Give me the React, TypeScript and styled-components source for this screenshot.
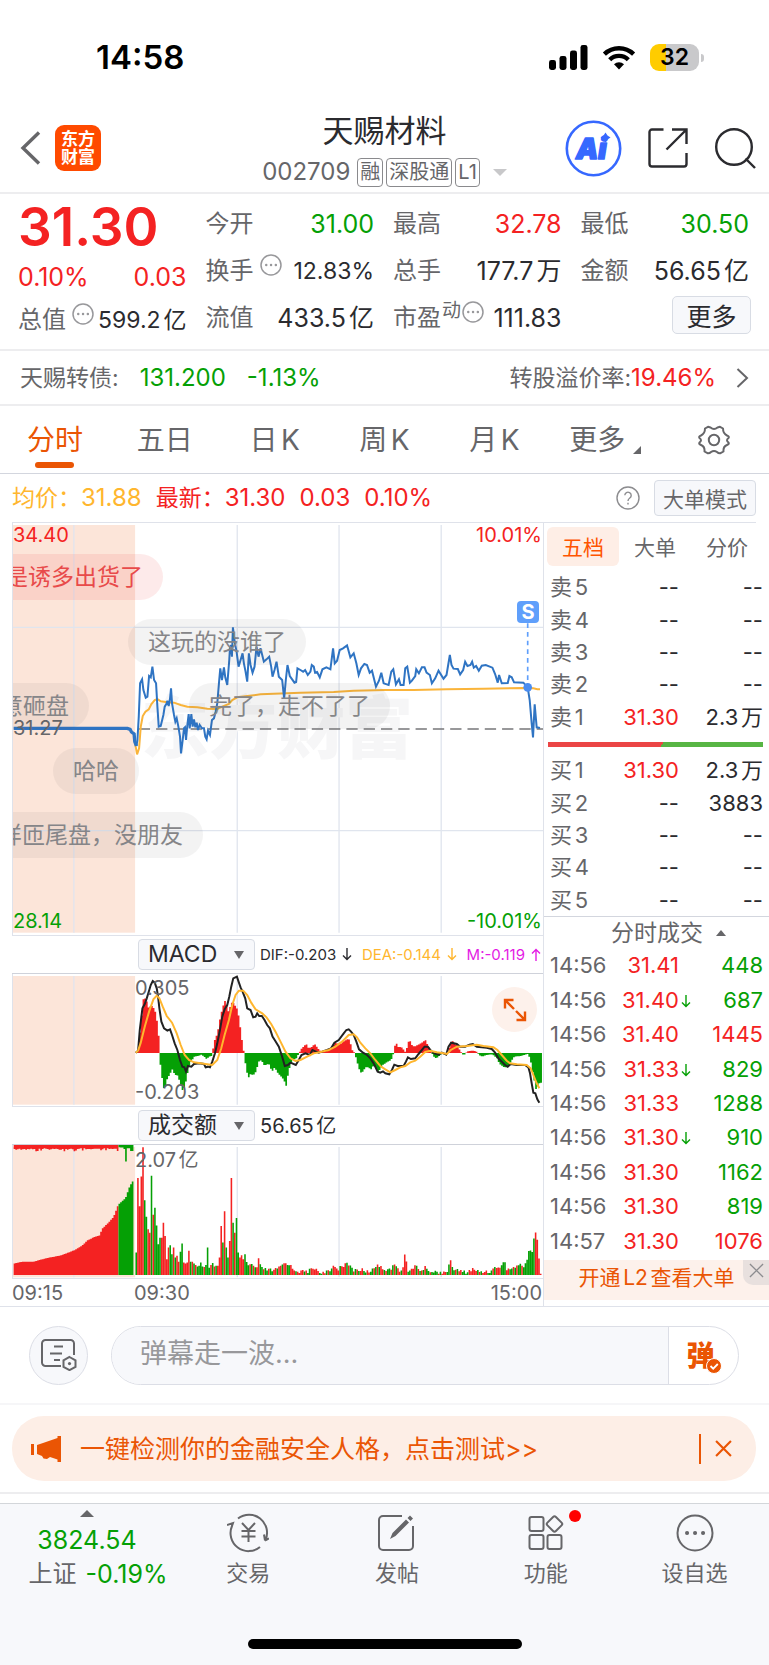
import React from 'react';
import styled, { createGlobalStyle } from 'styled-components';

const C = {
  red: '#f42222',
  green: '#05a005',
  dark: '#2b2b2f',
  gray: '#666669',
  line: '#dfe2ea',
  faint: '#ededef',
  panel: '#f7f8fb',
  orange: '#ea5504',
  peach: '#fdeee6',
  yellow: '#ffb62e',
  blue: '#2f74c3',
  magenta: '#e41be4',
};

const Global = createGlobalStyle`
  * { box-sizing: border-box; }
  body { margin: 0; background: #fff; }
  body, button, input, select {
    font-family: Inter, "Noto Sans CJK SC", sans-serif;
    text-autospace: normal;
  }
  button, select, input { margin: 0; padding: 0; border: 0; background: none; color: inherit; }
  svg { display: block; }
`;

const Page = styled.main`
  display: flex;
  flex-direction: column;
  min-height: 100vh;
  color: ${C.dark};
  font-size: 24px;
  line-height: 30px;
  white-space: nowrap;
`;

/* ---------- status bar ---------- */
const StatusBar = styled.div`
  display: flex;
  justify-content: space-between;
  align-items: center;
  height: 104px;
  padding: 10px 70px 0 96px;
  color: #000;
`;
const Clock = styled.time`
  font-size: 33px;
  font-weight: 600;
`;
const StatusIcons = styled.div`
  display: flex;
  align-items: center;
  gap: 14px;
`;
const Battery = styled.div`
  position: relative;
  width: 49px;
  height: 27px;
  border-radius: 9px;
  background: linear-gradient(90deg, #ffcc00 32%, #c9c9cb 32%);
  font-size: 23px;
  font-weight: 600;
  line-height: 27px;
  text-align: center;
  &::after {
    content: '';
    position: absolute;
    right: -5px;
    top: 10px;
    width: 3px;
    height: 8px;
    border-radius: 0 3px 3px 0;
    background: #c9c9cb;
  }
`;

/* ---------- header ---------- */
const Header = styled.header`
  display: grid;
  grid-template-columns: 1fr auto 1fr;
  align-items: center;
  height: 90px;
  padding: 0 13px;
  border-bottom: 2px solid ${C.faint};
`;
const HeaderSide = styled.div<{ $end?: boolean }>`
  display: flex;
  align-items: center;
  justify-content: ${(p) => (p.$end ? 'flex-end' : 'flex-start')};
  gap: ${(p) => (p.$end ? '26px' : '14px')};
  padding-left: 7px;
`;
const IconButton = styled.button`
  display: flex;
  align-items: center;
  justify-content: center;
  color: ${C.dark};
`;
const Logo = styled.div`
  width: 46px;
  height: 46px;
  padding-top: 5px;
  border-radius: 9px;
  background: #ff4a00;
  color: #fff;
  font-size: 17px;
  font-weight: 700;
  line-height: 18px;
  text-align: center;
`;
const TitleBlock = styled.div`
  display: flex;
  flex-direction: column;
  align-items: center;
  padding-top: 4px;
`;
const Title = styled.h1`
  margin: 0;
  font-size: 31px;
  font-weight: 400;
  line-height: 44px;
`;
const SubTitle = styled.div`
  display: flex;
  align-items: center;
  gap: 3px;
  height: 38px;
  color: ${C.gray};
  font-size: 24px;
`;
const StockCode = styled.span`
  margin-right: 4px;
`;
const Tag = styled.span`
  padding: 0 2px;
  border: 1px solid #8a8a8d;
  border-radius: 4px;
  font-size: 20px;
  line-height: 27px;
`;
const Caret = styled.i<{ $up?: boolean; $w?: number; $h?: number; $color?: string }>`
  display: inline-block;
  border: ${(p) => p.$w ?? 6}px solid transparent;
  border-${(p) => (p.$up ? 'bottom' : 'top')}: ${(p) => p.$h ?? p.$w ?? 6}px solid ${(p) => p.$color ?? C.gray};
  border-${(p) => (p.$up ? 'top' : 'bottom')}: 0;
`;
const CodeCaret = styled(Caret)`
  margin-left: 10px;
`;

/* ---------- quote ---------- */
const Quote = styled.section`
  display: grid;
  grid-template-columns: repeat(4, minmax(0, 1fr));
  column-gap: 19px;
  padding: 6px 20px 8px 18px;
  border-bottom: 2px solid ${C.faint};
`;
const QuoteCol = styled.div`
  display: grid;
  grid-template-rows: repeat(3, 47px);
  align-items: center;
`;
const PriceCol = styled(QuoteCol)`
  grid-template-rows: 55px 44px 42px;
`;
const Price = styled.strong`
  color: ${C.red};
  font-size: 53px;
  font-weight: 600;
  line-height: 55px;
`;
const Pair = styled.div`
  display: flex;
  justify-content: space-between;
  align-items: center;
`;
const Label = styled.span<{ $tight?: boolean }>`
  display: flex;
  gap: ${(p) => (p.$tight ? 1 : 6)}px;
  color: ${C.gray};
  sup { margin-top: -4px; font-size: 19px; line-height: 24px; vertical-align: baseline; }
`;
const Value = styled.span<{ $c?: string; $small?: boolean }>`
  color: ${(p) => p.$c ?? C.dark};
  font-size: ${(p) => (p.$small ? 23 : 25)}px;
`;
const Hint = styled.svg`
  flex: none;
  margin-top: -2px;
`;
const MoreButton = styled.button`
  justify-self: end;
  width: 79px;
  height: 38px;
  margin: 0 -2px 5px 0;
  border: 1px solid #d8dce4;
  border-radius: 5px;
  background: ${C.panel};
  font-size: 25px;
  color: ${C.dark};
`;

/* ---------- bond ---------- */
const BondRow = styled.a`
  display: flex;
  align-items: center;
  height: 55px;
  padding: 0 20px;
  border-bottom: 2px solid ${C.faint};
  color: ${C.gray};
  font-size: 23px;
  text-decoration: none;
`;
const BondName = styled.span`
  flex: 1;
  display: flex;
  gap: 21px;
`;
const Figure = styled.span<{ $c: string }>`
  color: ${(p) => p.$c};
  font-size: 24px;
`;
const BondRate = styled.span`
  margin-right: 20px;
`;

/* ---------- period tabs ---------- */
const Tabs = styled.nav`
  display: grid;
  grid-template-columns: repeat(7, minmax(0, 1fr));
  height: 68px;
  border-bottom: 1px solid #d3d6de;
`;
const Tab = styled.button<{ $on?: boolean }>`
  position: relative;
  display: flex;
  align-items: center;
  justify-content: center;
  color: ${(p) => (p.$on ? C.orange : C.gray)};
  font-size: 28px;
  line-height: 32px;
  &::after {
    content: '';
    display: ${(p) => (p.$on ? 'block' : 'none')};
    position: absolute;
    bottom: 5px;
    width: 39px;
    height: 6px;
    border-radius: 3px;
    background: ${C.orange};
  }
`;
const Corner = styled.i`
  align-self: flex-end;
  margin: 0 -2px 19px 8px;
  border: 4px solid transparent;
  border-right-color: ${C.gray};
  border-bottom-color: ${C.gray};
`;

const InfoRow = styled.div`
  display: flex;
  align-items: center;
  gap: 14px;
  height: 49px;
  margin: 0 13px 0 12px;
  border-bottom: 1px solid ${C.line};
  color: ${C.red};
  font-size: 23px;
`;
const Average = styled.span`
  color: ${C.yellow};
`;
const Spacer = styled.span`
  flex: 1;
`;
const ModeButton = styled.button`
  width: 102px;
  height: 36px;
  border: 1px solid #d8dce4;
  border-radius: 4px;
  background: ${C.panel};
  color: ${C.gray};
  font-size: 21px;
`;

/* ---------- market area ---------- */
const Market = styled.section`
  display: grid;
  grid-template-columns: minmax(0, 1fr) 225px;
  padding-left: 12px;
  border-bottom: 1px solid ${C.line};
`;
const Charts = styled.div`
  border-right: 1px solid ${C.line};
`;
const Plot = styled.div<{ $h: number }>`
  position: relative;
  height: ${(p) => p.$h}px;
  overflow: hidden;
  border-left: 1px solid ${C.line};
  border-bottom: 1px solid ${C.line};
`;
const Canvas = styled.svg`
  position: absolute;
  inset: 0;
  width: 100%;
  height: 100%;
`;
const Mark = styled.span<{ $top: number; $left?: number; $right?: number; $c?: string }>`
  position: absolute;
  top: ${(p) => p.$top}px;
  ${(p) => (p.$right !== undefined ? `right: ${p.$right}px;` : `left: ${p.$left ?? 0}px;`)}
  color: ${(p) => p.$c ?? C.gray};
  font-size: 20px;
  line-height: 24px;
`;
const Watermark = styled.span`
  position: absolute;
  top: 165px;
  left: 128px;
  color: #f6f6f7;
  font-size: 68px;
  font-weight: 900;
  line-height: 80px;
`;
const Bullet = styled.span<{ $top: number; $left: number; $hot?: boolean }>`
  position: absolute;
  top: ${(p) => p.$top}px;
  left: ${(p) => p.$left}px;
  height: 46px;
  padding: 0 20px;
  border-radius: 23px;
  background: ${(p) => (p.$hot ? 'rgba(240, 60, 60, 0.11)' : 'rgba(80, 80, 80, 0.07)')};
  color: ${(p) => (p.$hot ? '#e84a4a' : '#858588')};
  font-size: 23px;
  line-height: 47px;
`;
const Signal = styled.span`
  position: absolute;
  top: 78px;
  right: 4px;
  width: 22px;
  height: 22px;
  border-radius: 4px;
  background: #5f9ffb;
  color: #fff;
  font-size: 20px;
  font-weight: 700;
  line-height: 22px;
  text-align: center;
`;
const IndicatorBar = styled.div`
  display: flex;
  align-items: center;
  gap: 5px;
  height: 38px;
  padding-left: 126px;
  border-bottom: 1px solid #cfd2da;
`;
const SelectBox = styled.label`
  position: relative;
  display: flex;
  align-items: center;
  i { position: absolute; right: 11px; }
`;
const Select = styled.select`
  appearance: none;
  width: 117px;
  height: 31px;
  padding-left: 9px;
  border: 1px solid #d8dce4;
  border-radius: 4px;
  background: ${C.panel};
  font-size: 23px;
  line-height: 29px;
`;
const Readings = styled.div`
  flex: 1;
  display: flex;
  justify-content: space-between;
  padding-right: 2px;
  font-size: 15px;
`;
const Reading = styled.span<{ $c?: string }>`
  display: flex;
  align-items: center;
  gap: 6px;
  color: ${(p) => p.$c ?? C.dark};
`;
const Turnover = styled.span`
  font-size: 20px;
`;
const Expand = styled.button`
  position: absolute;
  top: 13px;
  right: 6px;
  display: flex;
  align-items: center;
  justify-content: center;
  width: 45px;
  height: 45px;
  border-radius: 50%;
  background: #fdf1eb;
`;
const Times = styled.div`
  display: grid;
  grid-template-columns: 122px 1fr auto;
  padding: 2px 1px 1px 0;
  color: ${C.gray};
  font-size: 20px;
  line-height: 24px;
`;

/* ---------- order book ---------- */
const Book = styled.aside`
  display: flex;
  flex-direction: column;
  padding-bottom: 6px;
`;
const BookTabs = styled.div`
  display: grid;
  grid-template-columns: repeat(3, 1fr);
  margin: 4px 6px 5px 3px;
`;
const BookTab = styled.button<{ $on?: boolean }>`
  height: 39px;
  padding-bottom: 2px;
  border-radius: 6px;
  background: ${(p) => (p.$on ? '#feeee6' : 'none')};
  color: ${(p) => (p.$on ? '#ff5500' : C.gray)};
  font-size: 21px;
`;
const Levels = styled.table<{ $h: number }>`
  width: 213px;
  height: ${(p) => p.$h}px;
  margin-left: 6px;
  border-collapse: collapse;
  table-layout: fixed;
  font-size: 22px;
  line-height: 24px;
  th, td { padding: 0; font-weight: 400; text-align: right; }
  th { width: 60px; color: ${C.gray}; text-align: left; }
  td:nth-child(2) { width: 69px; }
  td:nth-child(3) { width: 14px; }
`;
const Cell = styled.td<{ $c?: string }>`
  color: ${(p) => p.$c ?? C.dark};
`;
const ArrowSlot = styled.span`
  display: flex;
  padding: 3px 0 0 2px;
`;
const Ratio = styled.div`
  height: 5px;
  margin: 9px 6px 7px 4px;
  background: linear-gradient(120deg, #eb4545 53%, #57b544 53%);
`;
const TradesTitle = styled.div`
  display: flex;
  align-items: center;
  justify-content: center;
  gap: 13px;
  height: 32px;
  padding-left: 24px;
  border-top: 1px solid #d3d6de;
  color: ${C.gray};
  font-size: 23px;
`;
const Promo = styled.div`
  position: relative;
  display: flex;
  align-items: center;
  justify-content: center;
  height: 40px;
  margin-top: 2px;
  background: #fdf1eb;
  a { color: ${C.orange}; font-size: 21px; line-height: 34px; padding-bottom: 4px; text-decoration: none; }
`;
const PromoClose = styled.button`
  position: absolute;
  top: 0;
  right: 0;
  display: flex;
  align-items: center;
  justify-content: center;
  width: 26px;
  height: 25px;
  padding-bottom: 4px;
  border-radius: 0 0 0 10px;
  background: #e8e0de;
  color: #8c8c8f;
`;

/* ---------- comment bar ---------- */
const CommentBar = styled.div`
  display: flex;
  align-items: center;
  gap: 23px;
  height: 98px;
  padding: 0 30px 0 29px;
  border-bottom: 2px solid #f6f6f8;
`;
const RoundButton = styled.button`
  display: flex;
  align-items: center;
  justify-content: center;
  width: 59px;
  height: 59px;
  border: 1px solid #dcdee6;
  border-radius: 50%;
  background: ${C.panel};
`;
const CommentField = styled.div`
  flex: 1;
  display: flex;
  height: 59px;
  overflow: hidden;
  border: 1px solid #dcdee6;
  border-radius: 30px;
`;
const CommentInput = styled.input`
  flex: 1;
  min-width: 0;
  padding: 0 28px 4px;
  background: ${C.panel};
  font-size: 27px;
  &::placeholder { color: #98989b; opacity: 1; }
`;
const SendButton = styled.button`
  position: relative;
  width: 70px;
  padding: 0 6px 2px 0;
  border-left: 1px solid #dcdee6;
  color: ${C.orange};
  font-size: 28px;
  font-weight: 900;
  svg { position: absolute; left: 37px; top: 31px; }
`;

const BannerWrap = styled.div`
  padding: 11px 13px 11px 12px;
  border-bottom: 2px solid ${C.faint};
`;
const Banner = styled.div`
  display: flex;
  align-items: center;
  height: 65px;
  padding: 0 24px 0 19px;
  border-radius: 32px;
  background: ${C.peach};
  color: ${C.orange};
  a { flex: 1; margin-left: 19px; color: inherit; font-size: 25px; text-decoration: none; }
`;
const BannerClose = styled.button`
  display: flex;
  align-items: center;
  height: 30px;
  padding-left: 14px;
  border-left: 2px solid ${C.orange};
  color: ${C.orange};
`;

/* ---------- bottom bar ---------- */
const BottomBar = styled.footer`
  flex: 1;
  display: flex;
  flex-direction: column;
  justify-content: space-between;
  align-items: center;
  margin-top: 9px;
  padding: 6px 0 16px;
  border-top: 1px solid #d3d6da;
  background: ${C.panel};
`;
const BottomNav = styled.nav`
  display: grid;
  grid-template-columns: 174px repeat(4, 1fr);
  width: 100%;
  margin-bottom: 40px;
`;
const NavItem = styled.button`
  position: relative;
  display: flex;
  flex-direction: column;
  align-items: center;
  gap: 5px;
  color: ${C.gray};
  font-size: 22px;
  line-height: 30px;
  svg { margin-top: 3px; }
`;
const IndexItem = styled(NavItem)`
  gap: 4px;
  color: ${C.green};
  font-size: 25px;
  i { margin-bottom: 4px; }
`;
const IndexLine = styled.span`
  display: flex;
  gap: 9px;
  padding-left: 22px;
  em { color: ${C.gray}; font-style: normal; font-size: 24px; }
`;
const Dot = styled.i`
  position: absolute;
  top: 0;
  left: calc(50% + 23px);
  width: 12px;
  height: 12px;
  border-radius: 50%;
  background: #ff0000;
`;
const HomeIndicator = styled.div`
  width: 274px;
  height: 10px;
  border-radius: 5px;
  background: #000;
`;

/* ---------- chart data ---------- */
const PRE = '38,265 380,265 388,268 392,276 400,282 402,305 407,318';
const PRICE =
  '407,318 410,300 414,230 418,130 424,118 428,150 435,173 440,170 445,108 450,112 455,80 460,120 466,130 470,200 474,260 480,258 488,225 492,200 498,190 500,182 504,198 508,175 511,145 514,190 520,225 524,245 528,235 533,260 538,290 541,340 546,300 550,265 553,262 556,300 560,255 564,222 567,265 572,222 576,260 580,238 584,262 588,248 592,270 597,255 604,265 610,265 614,290 618,298 622,272 628,285 634,240 640,235 645,215 650,190 655,130 659,85 664,120 670,82 674,112 680,135 686,60 688,25 691,15 694,50 697,-38 703,10 708,35 714,80 720,60 726,40 730,70 735,95 740,125 745,40 750,75 756,98 762,80 768,20 774,50 780,25 790,65 798,58 806,50 812,80 816,110 822,90 828,65 835,110 845,120 851,175 856,120 861,75 868,108 875,118 882,128 887,126 891,85 900,90 908,95 914,90 922,105 930,95 934,75 940,80 944,98 950,96 958,112 966,88 978,82 990,88 998,25 1003,70 1010,62 1018,30 1028,25 1040,16 1050,52 1060,40 1068,70 1075,105 1082,85 1092,72 1100,75 1108,98 1115,92 1127,140 1136,122 1143,98 1150,130 1165,135 1173,95 1179,88 1187,133 1196,118 1201,135 1210,135 1215,85 1221,80 1229,128 1235,122 1245,108 1248,88 1256,100 1265,82 1273,82 1279,98 1289,105 1295,130 1305,115 1315,92 1330,116 1339,105 1349,45 1354,75 1360,86 1373,87 1380,103 1389,90 1395,65 1402,78 1411,75 1416,65 1421,83 1428,78 1436,92 1445,77 1457,75 1477,83 1485,102 1493,128 1497,105 1505,130 1523,129 1528,108 1535,112 1542,127 1570,128 1583,142 1589,180 1595,250 1599,292 1604,193 1610,262 1620,264';
const AVG =
  '403,310 409,343 415,325 420,260 426,228 434,215 444,208 452,192 462,180 470,177 480,184 500,187 520,188 540,195 560,200 590,202 620,206 650,207 665,200 685,192 695,180 710,172 740,168 780,163 820,161 900,158 1000,156 1060,152 1155,150 1240,150 1340,148 1450,146 1570,144 1600,145 1612,148 1620,148';
const DIF =
  '405,368 412,362 417,300 425,235 432,222 438,205 444,185 450,165 456,153 462,158 468,175 472,200 476,235 482,275 490,295 500,302 508,298 514,315 522,340 530,360 538,390 545,410 551,412 556,425 562,408 572,410 580,402 595,400 610,402 615,412 622,410 628,412 635,395 643,370 650,340 658,300 665,260 672,238 680,225 686,200 692,170 698,145 709,140 714,155 720,172 726,185 734,205 740,235 750,240 758,262 765,260 770,250 776,258 784,258 792,270 800,285 808,295 816,320 824,332 835,350 845,380 853,408 862,405 870,398 886,405 895,390 903,375 915,370 928,375 936,360 945,364 955,368 965,365 980,360 992,355 1002,338 1015,330 1030,310 1038,300 1045,298 1052,305 1060,315 1068,335 1076,358 1088,368 1100,375 1110,385 1120,400 1132,425 1140,428 1148,424 1155,430 1167,433 1175,420 1182,404 1192,408 1210,408 1217,395 1223,382 1232,387 1245,385 1255,372 1265,360 1273,350 1283,350 1292,362 1302,370 1315,374 1325,368 1338,374 1345,350 1353,338 1370,342 1380,350 1395,350 1408,344 1418,342 1430,350 1445,352 1460,353 1475,357 1485,368 1495,385 1505,395 1515,405 1523,410 1532,402 1550,405 1575,405 1585,412 1590,430 1595,460 1600,488 1606,490 1612,508 1618,518';
const DEA =
  '405,368 412,362 420,338 432,290 445,245 458,208 468,197 476,205 486,230 498,258 514,278 528,310 540,345 552,375 565,390 580,397 600,400 620,403 635,405 650,390 662,355 672,315 685,270 695,225 705,195 715,182 728,182 740,195 752,218 765,238 785,250 798,262 812,282 825,305 840,335 855,365 870,385 885,393 900,390 920,380 940,370 960,366 985,360 1005,350 1025,335 1045,315 1060,313 1070,322 1080,338 1095,355 1110,370 1125,390 1140,408 1155,418 1170,427 1185,420 1200,412 1215,408 1230,397 1245,392 1260,380 1275,366 1290,362 1310,367 1325,369 1340,372 1352,360 1370,350 1400,348 1430,344 1450,348 1480,352 1492,360 1505,375 1520,392 1530,400 1550,403 1580,405 1592,415 1600,435 1610,460 1618,475';
const HIST =
  '405,367 410,360 415,310 420,260 425,208 432,205 438,220 442,238 448,225 455,232 460,240 465,262 470,300 474,350 476,400 480,430 485,472 490,478 496,450 505,432 514,415 520,440 525,430 535,455 541,480 546,480 552,460 558,430 565,400 572,390 578,380 590,378 600,374 608,380 616,388 622,380 630,378 634,360 640,330 648,310 655,270 662,238 670,212 676,225 682,248 688,222 694,215 700,225 708,238 714,270 720,320 726,355 729,380 735,420 741,445 746,432 756,435 764,425 772,395 780,390 788,405 795,405 802,400 812,425 820,412 830,430 840,440 848,450 854,470 860,435 868,400 875,390 885,385 893,370 899,358 908,348 915,342 922,355 930,352 940,342 948,352 955,362 962,364 975,362 990,352 1003,338 1015,345 1025,335 1035,330 1042,325 1048,340 1054,362 1060,368 1065,385 1072,412 1078,428 1086,425 1092,412 1100,412 1110,418 1118,405 1125,415 1132,425 1145,405 1155,398 1170,390 1176,375 1180,350 1186,340 1192,352 1200,350 1208,360 1214,368 1220,342 1225,328 1232,345 1240,350 1250,345 1262,338 1273,330 1280,345 1288,362 1294,372 1302,385 1310,382 1318,374 1340,368 1346,350 1352,330 1360,340 1370,350 1378,362 1384,373 1392,374 1398,364 1410,362 1420,362 1428,366 1435,376 1445,380 1455,375 1475,373 1488,385 1496,402 1510,412 1522,412 1530,395 1540,380 1560,378 1580,372 1588,385 1594,420 1600,450 1606,480 1614,460 1622,458';
const AUCTION = '38,1003 60,998 95,998 130,988 180,978 220,962 240,950 258,933 280,922 295,918 300,900 320,880 336,862 350,825 372,805 385,768 398,748';
const OPENING =
  'g970 r745 r830 r740 r652 g812 g862 r900 r910 g738 r856 g835 g888 g945 g925 r925 r880 r920 r990 r955 g948 g975 r955 g985 r980 r998 g968 g943 r1000 r1003 r1000 r965 g998 r998 g1003 r1008 g1012 g1010 g1000 g1012 r1014 g1008 g955 g1016 r1008 g1002 r1012 g1010 r1010 r985 r890 g940 r845 g955 g985 r935 r745 g880 r910 g866 g970 r985 r978 r990 g975';
const SESSION =
  '734,1000 745,1008 750,1002 760,1014 768,1012 772,986 778,1014 790,1018 810,1022 830,1018 845,1002 862,1000 875,1018 900,1026 920,1024 940,1014 960,1030 985,1026 1000,1003 1008,1020 1022,1006 1044,1004 1055,1020 1080,1020 1100,1026 1118,1018 1129,1000 1140,1014 1155,1018 1168,1016 1185,1006 1195,1022 1208,1010 1213,955 1218,1020 1232,1022 1245,1006 1260,1024 1275,1012 1290,1026 1320,1028 1340,1022 1350,990 1357,1018 1370,1022 1395,1028 1415,1018 1435,1026 1470,1024 1490,1008 1500,1014 1510,994 1518,1018 1535,1016 1550,1006 1570,1008 1580,990 1586,953 1591,970 1596,968 1602,895 1607,925 1612,938 1617,1031';

type Point = [number, number];
const parse = (s: string): Point[] => s.split(' ').map((p) => p.split(',').map(Number) as Point);
const sample = (pts: Point[], x: number) => {
  const i = pts.findIndex((p) => p[0] >= x);
  if (i <= 0) return pts[i === 0 ? 0 : pts.length - 1][1];
  const [a, b] = [pts[i - 1], pts[i]];
  return a[1] + ((b[1] - a[1]) * (x - a[0])) / (b[0] - a[0]);
};
const noise = (i: number) => {
  const v = Math.sin(i * 12.9898) * 43758.5453;
  return v - Math.floor(v);
};
/* one bar per trading minute */
const STEP = 1226 / 240;

const rect = (x: number, w: number, from: number, to: number) =>
  `M${x} ${from}h${w}V${to}h${-w}z`;

function histogram() {
  const pts = parse(HIST);
  let up = '';
  let down = '';
  for (let x = 405; x < 1624; x += STEP) {
    const y = sample(pts, x);
    if (y < 369) up += rect(x, STEP, 369, y);
    else down += rect(x, STEP, 369, y);
  }
  return { up, down };
}

function volumes() {
  let up = '';
  let down = '';
  const auction = parse(AUCTION);
  for (let x = 38, i = 0; x < 397; x += 5, i++) {
    const bar = rect(x, 5, 1038, sample(auction, x));
    const spike = x > 100 && noise(i) > 0.8 ? 12 : 0;
    if (x < 353) {
      up += bar;
      up += rect(x, 5, 645, 655 + Math.round(noise(i + 9) * 4) + spike / 2);
    } else {
      down += bar;
      down += rect(x, 5, 645, x === 373 ? 695 : x > 385 ? 663 : 652 + noise(i) * 8);
    }
  }
  const opening = OPENING.split(' ');
  opening.forEach((t, i) => {
    const bar = rect(404 + i * STEP, 4.7, 1038, Number(t.slice(1)));
    if (t[0] === 'r') up += bar;
    else down += bar;
  });
  const session = parse(SESSION);
  for (let i = opening.length; i < 239; i++) {
    const x = 404 + i * STEP;
    const base = sample(session, x);
    const y = Math.min(1034, base + (base > 1000 ? (noise(i) - 0.3) * 12 : 0));
    const isRed = x > 1576 ? Math.abs(x - 1607) < 3 || x > 1614 : Math.abs(x - 1213) < 4 || noise(i + 50) > 0.5;
    if (isRed) up += rect(x, 4.7, 1038, y);
    else down += rect(x, 4.7, 1038, y);
  }
  return { up, down };
}
const HISTOGRAM = histogram();
const VOLUMES = volumes();

function Backdrop({ top, bottom }: { top: number; bottom: number }) {
  return (
    <>
      <rect x="36" y={top} width="367" height={bottom - top} fill="#fce5d9" />
      {[219, 710, 1016, 1323].map((x) => (
        <line key={x} x1={x} x2={x} y1={top} y2={bottom} stroke="#e0e5ee" strokeWidth="4" />
      ))}
    </>
  );
}

/* ---------- icons ---------- */
const HintIcon = () => (
  <Hint width="22" height="22" viewBox="0 0 22 22" fill="none" stroke="#98989b">
    <circle cx="11" cy="11" r="10" strokeWidth="1.5" />
    <path d="M6.2 11h.1M11 11h.1M15.8 11h.1" strokeWidth="2.4" strokeLinecap="round" />
  </Hint>
);
const Cross = ({ s, w = 1.6 }: { s: number; w?: number }) => (
  <svg width={s} height={s} viewBox="0 0 16 16" stroke="currentColor" strokeWidth={w}>
    <path d="M1 1l14 14M15 1L1 15" />
  </svg>
);
const Arrow = ({ up }: { up?: boolean }) => (
  <svg width="10" height="13" viewBox="0 0 10 13" fill="none" stroke="currentColor" strokeWidth="1.4">
    <path d={up ? 'M5 13V1.500M1 5.500l4-4 4 4' : 'M5 0v11.500M1 7.500l4 4 4-4'} />
  </svg>
);

type Level = [string, string, string];
const SELL: Level[] = [['卖5', '--', '--'], ['卖4', '--', '--'], ['卖3', '--', '--'], ['卖2', '--', '--'], ['卖1', '31.30', '2.3万']];
const BUY: Level[] = [['买1', '31.30', '2.3万'], ['买2', '--', '3883'], ['买3', '--', '--'], ['买4', '--', '--'], ['买5', '--', '--']];
const TRADES: [string, string, boolean, string, boolean][] = [
  ['14:56', '31.41', false, '448', false],
  ['14:56', '31.40', true, '687', false],
  ['14:56', '31.40', false, '1445', true],
  ['14:56', '31.33', true, '829', false],
  ['14:56', '31.33', false, '1288', false],
  ['14:56', '31.30', true, '910', false],
  ['14:56', '31.30', false, '1162', false],
  ['14:56', '31.30', false, '819', false],
  ['14:57', '31.30', false, '1076', true],
];

function LevelTable({ rows }: { rows: Level[] }) {
  return (
    <Levels $h={162}>
      <tbody>
        {rows.map(([name, price, vol]) => (
          <tr key={name}>
            <th scope="row">{name}</th>
            <Cell $c={price === '--' ? undefined : C.red}>{price}</Cell>
            <td />
            <Cell>{vol}</Cell>
          </tr>
        ))}
      </tbody>
    </Levels>
  );
}

export default function App() {
  return (
    <Page>
      <Global />
      <StatusBar>
        <Clock>14:58</Clock>
        <StatusIcons>
          <svg width="39" height="25" viewBox="0 0 39 25">
            <rect x="0" y="15" width="7" height="10" rx="2.4" />
            <rect x="10.5" y="11" width="7" height="14" rx="2.4" />
            <rect x="21" y="5.5" width="7" height="19.5" rx="2.4" />
            <rect x="31.5" y="0" width="7" height="25" rx="2.4" />
          </svg>
          <svg width="34" height="25" viewBox="0 0 34 25" fill="none" stroke="#000" strokeWidth="4.4">
            <path d="M2.4 9.2a21 21 0 0 1 29.2 0" />
            <path d="M7.7 14.7a13.2 13.2 0 0 1 18.6 0" />
            <path d="M17 24.5l-5-5.2a7.2 7.2 0 0 1 10 0z" fill="#000" stroke="none" />
          </svg>
          <Battery>32</Battery>
        </StatusIcons>
      </StatusBar>

      <Header>
        <HeaderSide>
          <IconButton aria-label="返回">
            <svg width="21" height="34" viewBox="0 0 21 34" fill="none" stroke={C.gray} strokeWidth="3.4">
              <path d="M19 1.5L3 17l16 15.5" />
            </svg>
          </IconButton>
          <Logo>东方<br />财富</Logo>
        </HeaderSide>
        <TitleBlock>
          <Title>天赐材料</Title>
          <SubTitle>
            <StockCode>002709</StockCode>
            <Tag>融</Tag>
            <Tag>深股通</Tag>
            <Tag>L1</Tag>
            <CodeCaret $w={7} $color="#c8c8ca" />
          </SubTitle>
        </TitleBlock>
        <HeaderSide $end>
          <IconButton aria-label="智能助手">
            <svg width="57" height="57" viewBox="0 0 57 57">
              <circle cx="28.5" cy="28.5" r="26.7" fill="none" stroke="#3668ff" strokeWidth="2.6" />
              <text x="11" y="39" fill="#3668ff" stroke="#3668ff" strokeWidth="1.6" strokeLinejoin="round" fontFamily="Inter" fontSize="28" fontWeight="900" fontStyle="italic">Ai</text>
              <path d="M40.500 12.500l2 3 3 2-3 2-2 3-2-3-3-2 3-2z" fill="#3668ff" />
            </svg>
          </IconButton>
          <IconButton aria-label="分享">
            <svg width="40" height="40" viewBox="0 0 40 40" fill="none" stroke={C.dark} strokeWidth="2.4">
              <path d="M15.5 1.5H4A2.5 2.5 0 0 0 1.5 4v32A2.5 2.5 0 0 0 4 38.5h32a2.5 2.5 0 0 0 2.5-2.5V25M24 1.5h14.5V16M38 2L18.500 21.500" />
            </svg>
          </IconButton>
          <IconButton aria-label="搜索">
            <svg width="42" height="42" viewBox="0 0 42 42" fill="none" stroke={C.dark} strokeWidth="2.4">
              <circle cx="20" cy="20" r="17.8" />
              <path d="M31.5 31.5l9.500 9.500" />
            </svg>
          </IconButton>
        </HeaderSide>
      </Header>

      <Quote>
        <PriceCol>
          <Price>31.30</Price>
          <Pair><Value $c={C.red}>0.10%</Value><Value $c={C.red}>0.03</Value></Pair>
          <Pair><Label>总值<HintIcon /></Label><Value $small>599.2亿</Value></Pair>
        </PriceCol>
        <QuoteCol>
          <Pair><Label>今开</Label><Value $c={C.green}>31.00</Value></Pair>
          <Pair><Label>换手<HintIcon /></Label><Value $small>12.83%</Value></Pair>
          <Pair><Label>流值</Label><Value>433.5亿</Value></Pair>
        </QuoteCol>
        <QuoteCol>
          <Pair><Label>最高</Label><Value $c={C.red}>32.78</Value></Pair>
          <Pair><Label>总手</Label><Value>177.7万</Value></Pair>
          <Pair><Label $tight>市盈<sup>动</sup><HintIcon /></Label><Value>111.83</Value></Pair>
        </QuoteCol>
        <QuoteCol>
          <Pair><Label>最低</Label><Value $c={C.green}>30.50</Value></Pair>
          <Pair><Label>金额</Label><Value>56.65亿</Value></Pair>
          <MoreButton>更多</MoreButton>
        </QuoteCol>
      </Quote>

      <BondRow href="#bond">
        <BondName>
          <span>天赐转债:</span>
          <Figure $c={C.green}>131.200</Figure>
          <Figure $c={C.green}>-1.13%</Figure>
        </BondName>
        <BondRate>转股溢价率:<Figure $c={C.red}>19.46%</Figure></BondRate>
        <svg width="13" height="20" viewBox="0 0 13 20" fill="none" stroke={C.gray} strokeWidth="2">
          <path d="M1.5 1l9.5 9-9.5 9" />
        </svg>
      </BondRow>

      <Tabs>
        <Tab $on>分时</Tab>
        <Tab>五日</Tab>
        <Tab>日K</Tab>
        <Tab>周K</Tab>
        <Tab>月K</Tab>
        <Tab>更多<Corner /></Tab>
        <Tab aria-label="设置">
          <svg width="32" height="30" viewBox="0 0 32 30" fill="none" stroke={C.gray} strokeWidth="2">
            <path d="M12.500 2.500Q16 5.500 19.500 2.500L22 1.800 25 3.500Q25 8.500 29 10.500 31.500 11.500 30.500 13 27.500 15 30.500 17.500 31.500 19 29 20 25 21.500 25.500 26.500L22.500 28.200Q20.500 28.500 19 27 16 24.800 13 27 11.500 28.500 9.500 28.200L6.500 26.500Q7 21.500 3 20 .5 19 1.500 17.500 4.500 15 1.500 13 .5 11.500 3 10.500 7 8.500 7 3.500L10 1.800z" strokeLinejoin="round" />
            <circle cx="16" cy="15" r="5.2" />
          </svg>
        </Tab>
      </Tabs>

      <InfoRow>
        <Average>均价：<Figure $c={C.yellow}>31.88</Figure></Average>
        <span>最新：<Figure $c={C.red}>31.30</Figure></span>
        <Figure $c={C.red}>0.03</Figure>
        <Figure $c={C.red}>0.10%</Figure>
        <Spacer />
        <svg width="24" height="24" viewBox="0 0 24 24" fill="none" stroke="#8c8c8f" strokeWidth="1.4">
          <circle cx="12" cy="12" r="11" />
          <path d="M8.800 9.300a3.200 3.200 0 1 1 5 2.700c-1.300.9-1.800 1.500-1.800 3M12 16.800v1.800" />
        </svg>
        <ModeButton>大单模式</ModeButton>
      </InfoRow>

      <Market>
        <Charts>
          <Plot $h={413}>
            <Canvas viewBox="36 -351 1593 1236" preserveAspectRatio="none">
              <Backdrop top={-345} bottom={878} />
              <path d="M36-38H1629M36 572H1629" stroke="#e0e5ee" strokeWidth="4" />
            </Canvas>
            <Watermark>东方财富</Watermark>
            <Canvas viewBox="36 -351 1593 1236" preserveAspectRatio="none" fill="none">
              <path d="M414 267H1629" stroke="#77777a" strokeWidth="5" strokeDasharray="34 18" />
              <path d="M1583-50V130" stroke="#5f9ffb" strokeWidth="5" strokeDasharray="14 12" />
              <polyline points={AVG} stroke="#fab43a" strokeWidth="6" />
              <polyline points={PRE} stroke={C.blue} strokeWidth="10" />
              <polyline points={PRICE} stroke={C.blue} strokeWidth="6" />
              <circle cx="1583" cy="142" r="13" fill="#4a8df0" />
            </Canvas>
            <Mark $top={0} $c={C.red}>34.40</Mark>
            <Mark $top={0} $right={1} $c={C.red}>10.01%</Mark>
            <Mark $top={193}>31.27</Mark>
            <Mark $top={386} $c={C.green}>28.14</Mark>
            <Mark $top={386} $right={1} $c={C.green}>-10.01%</Mark>
            <Bullet $top={31} $left={-28} $hot>是诱多出货了</Bullet>
            <Bullet $top={96} $left={115}>这玩的没谁了</Bullet>
            <Bullet $top={160} $left={-33}>意砸盘</Bullet>
            <Bullet $top={160} $left={176}>完了，走不了了</Bullet>
            <Bullet $top={225} $left={40}>哈哈</Bullet>
            <Bullet $top={289} $left={-34}>样匝尾盘，没朋友</Bullet>
            <Signal>S</Signal>
          </Plot>
          <IndicatorBar>
            <SelectBox>
              <Select aria-label="指标" defaultValue="MACD"><option>MACD</option></Select>
              <Caret $w={5} $h={8} />
            </SelectBox>
            <Readings>
              <Reading>DIF:-0.203 <Arrow /></Reading>
              <Reading $c={C.yellow}>DEA:-0.144 <Arrow /></Reading>
              <Reading $c={C.magenta}>M:-0.119 <Arrow up /></Reading>
            </Readings>
          </IndicatorBar>
          <Plot $h={133}>
            <Canvas viewBox="36 132 1593 396" preserveAspectRatio="none" fill="none">
              <Backdrop top={138} bottom={524} />
              <path d={HISTOGRAM.up} fill={C.red} />
              <path d={HISTOGRAM.down} fill={C.green} />
              <polyline points={DIF} stroke="#222" strokeWidth="6" />
              <polyline points={DEA} stroke={C.yellow} strokeWidth="6" />
            </Canvas>
            <Mark $top={2} $left={122}>0.305</Mark>
            <Mark $top={106} $left={122}>-0.203</Mark>
            <Expand aria-label="放大">
              <svg width="24" height="24" viewBox="0 0 24 24" fill="none" stroke={C.orange} strokeWidth="2.4">
                <path d="M2 10.500V2h8.500M2 2l9 9M22 13.500V22h-8.500M22 22l-9-9" />
              </svg>
            </Expand>
          </Plot>
          <IndicatorBar>
            <SelectBox>
              <Select aria-label="成交指标" defaultValue="成交额"><option>成交额</option></Select>
              <Caret $w={5} $h={8} />
            </SelectBox>
            <Turnover>56.65亿</Turnover>
          </IndicatorBar>
          <Plot $h={134}>
            <Canvas viewBox="36 645 1593 402" preserveAspectRatio="none">
              <Backdrop top={651} bottom={1045} />
              <path d={VOLUMES.up} fill={C.red} />
              <path d={VOLUMES.down} fill={C.green} />
            </Canvas>
            <Mark $top={3} $left={122}>2.07亿</Mark>
          </Plot>
          <Times><span>09:15</span><span>09:30</span><span>15:00</span></Times>
        </Charts>

        <Book>
          <BookTabs>
            <BookTab $on>五档</BookTab>
            <BookTab>大单</BookTab>
            <BookTab>分价</BookTab>
          </BookTabs>
          <LevelTable rows={SELL} />
          <Ratio />
          <LevelTable rows={BUY} />
          <TradesTitle>分时成交<Caret $up $w={5} $h={6} /></TradesTitle>
          <Levels $h={310}>
            <tbody>
              {TRADES.map(([time, price, drop, vol, buy], i) => (
                <tr key={i}>
                  <th scope="row">{time}</th>
                  <Cell $c={C.red}>{price}</Cell>
                  <Cell $c={C.green}>{drop && <ArrowSlot><Arrow /></ArrowSlot>}</Cell>
                  <Cell $c={buy ? C.red : C.green}>{vol}</Cell>
                </tr>
              ))}
            </tbody>
          </Levels>
          <Promo>
            <a href="#level2">开通L2查看大单</a>
            <PromoClose aria-label="关闭"><Cross s={15} w={1.4} /></PromoClose>
          </Promo>
        </Book>
      </Market>

      <CommentBar>
        <RoundButton aria-label="弹幕设置">
          <svg width="36" height="32" viewBox="0 0 36 32" fill="none" stroke={C.gray} strokeWidth="2">
            <path d="M33 16V4.500A3.500 3.500 0 0 0 29.500 1H4.500A3.500 3.500 0 0 0 1 4.500v19A3.500 3.500 0 0 0 4.500 27H20M13 7.500h9M9 14.500h12M13 21h6" />
            <path d="M28.500 18l6 3.400v6.400l-6 3.300-6-3.300v-6.400z" />
            <circle cx="28.500" cy="24.600" r="1.600" fill={C.gray} stroke="none" />
          </svg>
        </RoundButton>
        <CommentField>
          <CommentInput aria-label="弹幕" placeholder="弹幕走一波..." />
          <SendButton aria-label="弹幕开关">
            弹
            <svg width="16" height="16" viewBox="0 0 16 16">
              <circle cx="8" cy="8" r="7.500" fill={C.orange} stroke="#fff" strokeWidth="1" />
              <path d="M4.500 8l2.700 2.700 4.600-4.700" fill="none" stroke="#fff" strokeWidth="1.800" />
            </svg>
          </SendButton>
        </CommentField>
      </CommentBar>

      <BannerWrap>
        <Banner>
          <svg width="30" height="26" viewBox="0 0 30 26" fill={C.orange}>
            <path d="M0 8h3v11H0zM6 9l6-2 14.500-5V0H30v26h-3.500v-2.500L19 21l-3 2-3.500-.5L11 20l-5-2z" />
          </svg>
          <a href="#test">一键检测你的金融安全人格，点击测试&gt;&gt;</a>
          <BannerClose aria-label="关闭"><Cross s={17} w={2} /></BannerClose>
        </Banner>
      </BannerWrap>

      <BottomBar>
        <BottomNav>
          <IndexItem>
            <Caret $up $w={7} />
            <span>3824.54</span>
            <IndexLine><em>上证</em>-0.19%</IndexLine>
          </IndexItem>
          <NavItem>
            <svg width="42" height="40" viewBox="0 0 42 40" fill="none" stroke={C.gray} strokeWidth="2">
              <path d="M11 5.500a18 18 0 0 1 27.500 21.500M0 12l6-2-1 3a18 18 0 0 0 28 21M38 27.500l4-2M38 27.500l-1-6" />
              <path d="M15 10l6.500 7 6.500-7M14.500 18h14M14.500 23.500h14M21.500 17v12" />
            </svg>
            交易
          </NavItem>
          <NavItem>
            <svg width="38" height="40" viewBox="0 0 38 40" fill="none" stroke={C.gray} strokeWidth="2">
              <path d="M24 3H5a4 4 0 0 0-4 4v26a4 4 0 0 0 4 4h26a4 4 0 0 0 4-4V13" />
              <path d="M12 26l2.500-6L28 6.500l3 3L17.500 23zM29.500 5l2.500-2.500 3 3L32.500 8z" fill={C.gray} stroke="none" />
            </svg>
            发帖
          </NavItem>
          <NavItem>
            <svg width="36" height="40" viewBox="0 0 36 40" fill="none" stroke={C.gray} strokeWidth="2">
              <rect x="1.500" y="4" width="14" height="14" rx="2" />
              <rect x="1.500" y="22" width="14" height="14" rx="2" />
              <rect x="19.500" y="22" width="14" height="14" rx="2" />
              <rect x="20.500" y="5" width="12" height="12" rx="2" transform="rotate(45 26.500 11)" />
            </svg>
            功能
            <Dot />
          </NavItem>
          <NavItem>
            <svg width="38" height="40" viewBox="0 0 38 40" fill="none" stroke={C.gray} strokeWidth="2">
              <circle cx="19" cy="20" r="17.500" />
              <path d="M11 20h.1M19 20h.1M27 20h.1" strokeWidth="4" strokeLinecap="round" />
            </svg>
            设自选
          </NavItem>
        </BottomNav>
        <HomeIndicator />
      </BottomBar>
    </Page>
  );
}
